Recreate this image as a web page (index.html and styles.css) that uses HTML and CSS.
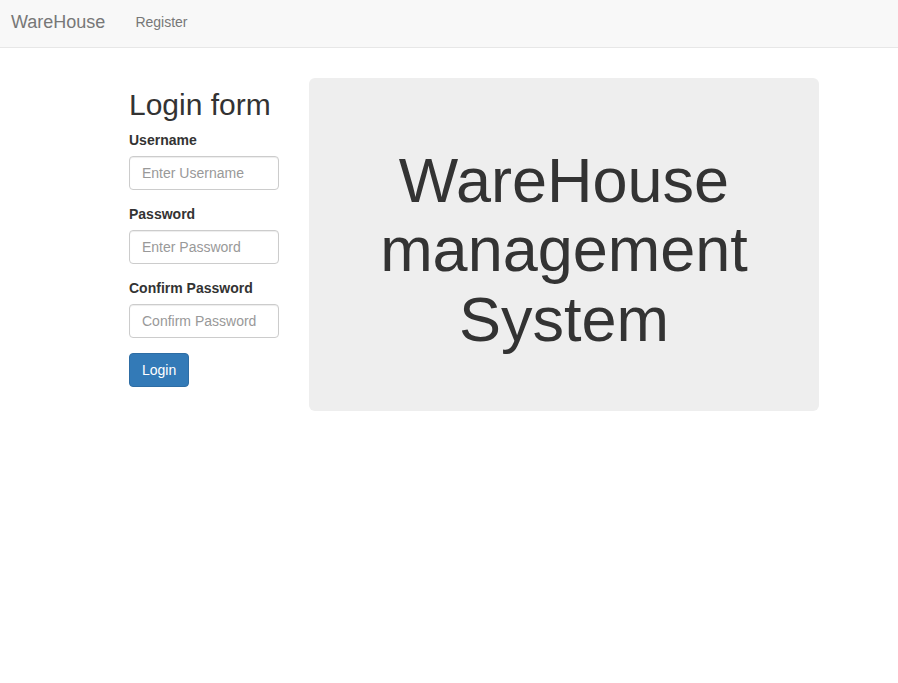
FILE: index.html
```html
<!DOCTYPE html>
<html>
<head>
<meta charset="utf-8">
<title>WareHouse</title>
<link rel="stylesheet" href="styles.css">
</head>
<body>
<nav class="navbar">
  <a class="brand" href="#">WareHouse</a>
  <a class="nav-link" href="#">Register</a>
</nav>
<main class="main">
  <section class="form-col">
    <h2 class="form-title">Login form</h2>
    <form class="login-form">
      <div class="form-group">
        <label class="label">Username</label>
        <input class="input" type="text" placeholder="Enter Username">
      </div>
      <div class="form-group">
        <label class="label">Password</label>
        <input class="input" type="password" placeholder="Enter Password">
      </div>
      <div class="form-group">
        <label class="label">Confirm Password</label>
        <input class="input" type="password" placeholder="Confirm Password">
      </div>
      <button class="btn" type="button">Login</button>
    </form>
  </section>
  <section class="jumbotron">
    <h1 class="jumbo-title">WareHouse management System</h1>
  </section>
</main>
</body>
</html>
```

FILE: styles.css
```css
* { box-sizing: border-box; }
html, body { margin: 0; padding: 0; }
body {
  font-family: "Liberation Sans", Arial, sans-serif;
  font-size: 14px;
  line-height: 1.42857;
  color: #333;
  background: #fff;
}
.navbar {
  display: flex;
  align-items: center;
  height: 48px;
  padding-bottom: 4px;
  background: #f8f8f8;
  border-bottom: 1px solid #e7e7e7;
}
.brand {
  font-size: 18px;
  line-height: 20px;
  color: #777;
  text-decoration: none;
  padding: 0 15px 0 11px;
}
.nav-link {
  font-size: 14px;
  line-height: 20px;
  color: #777;
  text-decoration: none;
  padding: 0 15px;
}
.main {
  display: flex;
  align-items: flex-start;
  padding: 20px 0 0 129px;
}
.form-col {
  width: 150px;
  margin-right: 30px;
}
.form-title {
  font-size: 30px;
  font-weight: 500;
  line-height: 1.1;
  margin: 20px 0 10px;
  white-space: nowrap;
}
.form-group { margin-bottom: 15px; }
.label {
  display: block;
  font-weight: bold;
  margin-bottom: 5px;
  white-space: nowrap;
}
.input {
  display: block;
  width: 150px;
  height: 34px;
  padding: 6px 12px;
  font-family: inherit;
  font-size: 14px;
  color: #555;
  background: #fff;
  border: 1px solid #ccc;
  border-radius: 4px;
  box-shadow: inset 0 1px 1px rgba(0,0,0,.075);
}
.input::placeholder { color: #999; }
.btn {
  display: inline-block;
  height: 34px;
  padding: 6px 12px;
  font-family: inherit;
  font-size: 14px;
  line-height: 20px;
  color: #fff;
  background: #337ab7;
  border: 1px solid #2e6da4;
  border-radius: 4px;
}
.jumbotron {
  width: 510px;
  margin-top: 10px;
  padding: 48px 60px;
  background: #eee;
  border-radius: 6px;
  text-align: center;
}
.jumbo-title {
  font-size: 63px;
  font-weight: 500;
  line-height: 1.1;
  margin: 20px 0 9px;
  color: #333;
}
```
